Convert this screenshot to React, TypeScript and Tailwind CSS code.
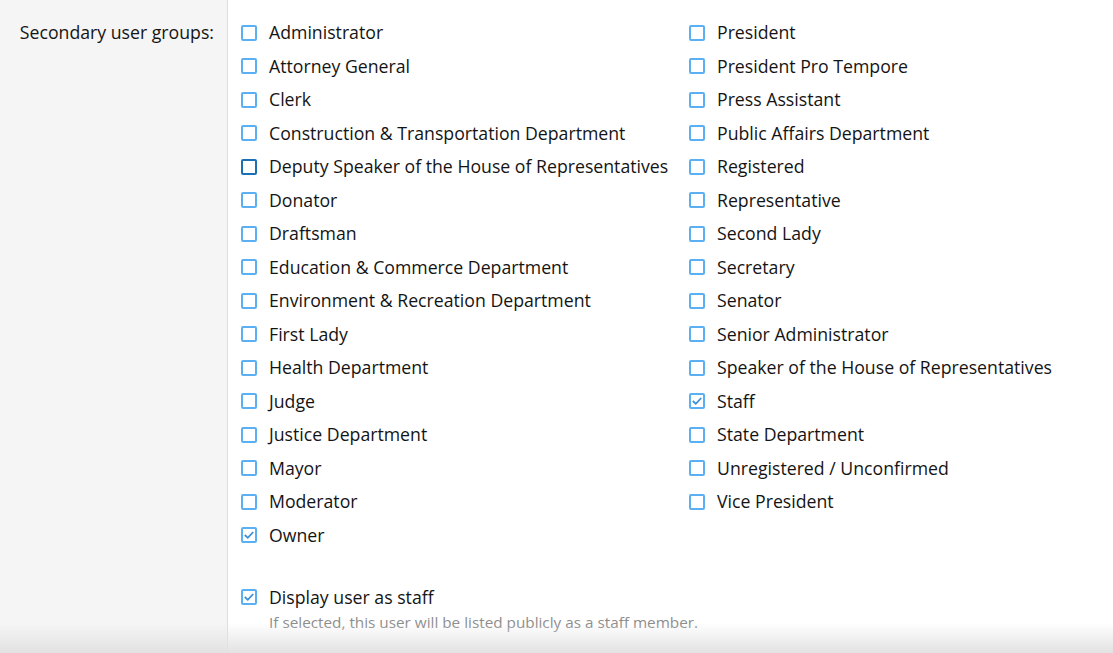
import React from 'react';

const left = [
  'Administrator',
  'Attorney General',
  'Clerk',
  'Construction & Transportation Department',
  'Deputy Speaker of the House of Representatives',
  'Donator',
  'Draftsman',
  'Education & Commerce Department',
  'Environment & Recreation Department',
  'First Lady',
  'Health Department',
  'Judge',
  'Justice Department',
  'Mayor',
  'Moderator',
  'Owner',
];

const right = [
  'President',
  'President Pro Tempore',
  'Press Assistant',
  'Public Affairs Department',
  'Registered',
  'Representative',
  'Second Lady',
  'Secretary',
  'Senator',
  'Senior Administrator',
  'Speaker of the House of Representatives',
  'Staff',
  'State Department',
  'Unregistered / Unconfirmed',
  'Vice President',
];

const checked = new Set(['Owner', 'Staff']);

function Box({ on, hover }: { on?: boolean; hover?: boolean }) {
  return (
    <span
      className={
        'flex h-4 w-4 shrink-0 items-center justify-center rounded-[2px] border-2 bg-white ' +
        (hover ? 'border-[#1a6fb5]' : 'border-[#5ab0f2]')
      }
    >
      {on && (
        <svg viewBox="0 0 12 12" className="h-3 w-3">
          <path d="M1.8 6 L4.8 8.8 L10.2 3" fill="none" stroke="#3a8fd8" strokeWidth="1.8" />
        </svg>
      )}
    </span>
  );
}

function Row({ label }: { label: string }) {
  return (
    <label className="flex h-[33.5px] items-center gap-3">
      <Box on={checked.has(label)} hover={label.startsWith('Deputy')} />
      <span>{label}</span>
    </label>
  );
}

export default function App() {
  return (
    <div
      className="relative flex h-[653px] w-full overflow-hidden bg-white text-[17.7px] text-[#141414]"
      style={{ fontFamily: '"Open Sans", "Noto Sans", sans-serif' }}
    >
      <div className="w-[228px] shrink-0 border-r border-[#dedede] bg-[#f5f5f5] pr-[13px] pt-[19px] text-right">
        Secondary user groups:
      </div>
      <div className="flex-1 pl-[13px] pt-4">
        <div className="grid grid-cols-[448px_1fr]">
          <div>
            {left.map((l) => (
              <Row key={l} label={l} />
            ))}
          </div>
          <div>
            {right.map((l) => (
              <Row key={l} label={l} />
            ))}
          </div>
        </div>
        <div className="mt-8">
          <label className="flex items-center gap-3">
            <Box on />
            <span>Display user as staff</span>
          </label>
          <p className="ml-7 text-[15.3px] text-[#8c8c8c]">
            If selected, this user will be listed publicly as a staff member.
          </p>
        </div>
      </div>
      <div className="pointer-events-none absolute bottom-0 left-0 right-0 h-[30px] bg-gradient-to-b from-transparent to-[#e2e2e2]" />
    </div>
  );
}
